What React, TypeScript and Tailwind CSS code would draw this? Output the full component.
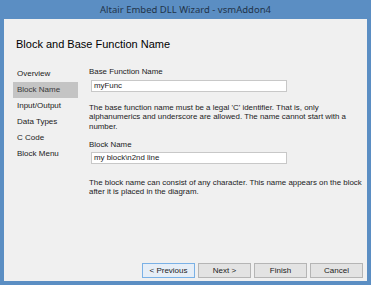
const steps = ['Overview', 'Block Name', 'Input/Output', 'Data Types', 'C Code', 'Block Menu'];

const buttons = [
  { label: '< Previous', focused: true },
  { label: 'Next >', focused: false },
  { label: 'Finish', focused: false },
  { label: 'Cancel', focused: false },
];

export default function App() {
  return (
    <div className="flex h-[285px] w-[371px] flex-col bg-[#5b8ec3] font-['Liberation_Sans',Arial,sans-serif] text-[#1b1b1b]">
      {/* title bar */}
      <div className="flex h-[19px] items-center justify-center pt-px font-['Noto_Sans',sans-serif] text-[9.5px] text-[#22344a]">
        Altair Embed DLL Wizard - vsmAddon4
      </div>

      <div className="mx-[4px] mb-[4px] flex flex-1 flex-col bg-[#f0f0f0]">
        <h1 className="pl-[12px] pt-[19px] text-[11px] leading-[13px] text-black">Block and Base Function Name</h1>

        <div className="mt-[15px] flex flex-1">
          {/* steps */}
          <div className="ml-[9px] flex w-[65px] flex-col text-[8px]">
            {steps.map((step) => (
              <div
                key={step}
                className={`flex h-[16px] items-center pl-[4px] ${step === 'Block Name' ? 'bg-[#c4c4c4] text-[#3a3a3a]' : ''}`}
              >
                {step}
              </div>
            ))}
          </div>

          {/* page */}
          <div className="ml-[11px] flex w-[274px] flex-col text-[7.9px] leading-[9.33px]">
            <div className="mt-[1px] leading-[9px]">Base Function Name</div>
            <div className="ml-[2px] mt-[4px] flex h-[12px] w-[196px] items-center border border-[#c8c8c8] bg-white pl-[2px]">
              myFunc
            </div>
            <p className="mt-[11px]">
              The base function name must be a legal 'C' identifier. That is, only alphanumerics and underscore are allowed. The name cannot start with a number.
            </p>
            <div className="mt-[9px] leading-[9px]">Block Name</div>
            <div className="ml-[2px] mt-[3px] flex h-[12px] w-[196px] items-center border border-[#c8c8c8] bg-white pl-[2px]">
              my block\n2nd line
            </div>
            <p className="mt-[14px]">
              The block name can consist of any character. This name appears on the block after it is placed in the diagram.
            </p>
          </div>
        </div>

        {/* footer buttons */}
        <div className="mb-[3px] mr-[4px] flex justify-end gap-[3px]">
          {buttons.map(({ label, focused }) => (
            <button
              key={label}
              className={`h-[15px] w-[53px] border text-[8px] leading-none ${
                focused ? 'border-[#7ab1e6] bg-[#e6eef7]' : 'border-[#b5b5b5] bg-[#e3e3e3]'
              }`}
            >
              {label}
            </button>
          ))}
        </div>
      </div>
    </div>
  );
}
